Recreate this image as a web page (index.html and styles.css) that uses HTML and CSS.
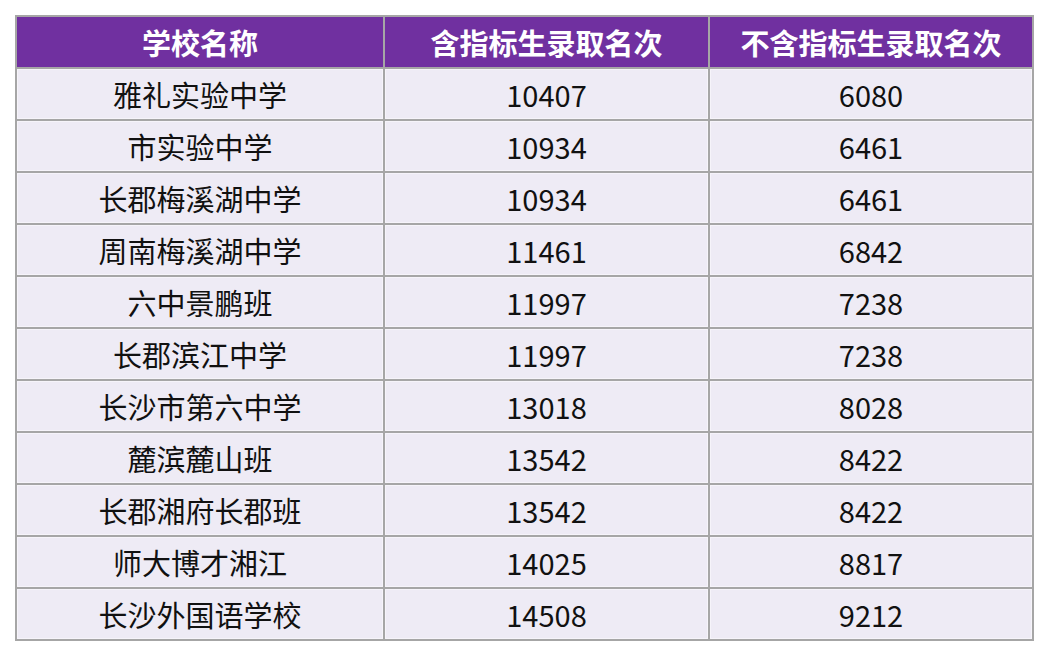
FILE: index.html
```html
<!DOCTYPE html>
<html lang="zh-CN">
<head>
<meta charset="utf-8">
<title>录取名次</title>
<link rel="stylesheet" href="styles.css">
</head>
<body>
<div class="page">
<table class="rank">
<colgroup><col class="c1"><col class="c2"><col class="c3"></colgroup>
<thead>
<tr><th>学校名称</th><th>含指标生录取名次</th><th>不含指标生录取名次</th></tr>
</thead>
<tbody>
<tr><td>雅礼实验中学</td><td>10407</td><td>6080</td></tr>
<tr><td>市实验中学</td><td>10934</td><td>6461</td></tr>
<tr><td>长郡梅溪湖中学</td><td>10934</td><td>6461</td></tr>
<tr><td>周南梅溪湖中学</td><td>11461</td><td>6842</td></tr>
<tr><td>六中景鹏班</td><td>11997</td><td>7238</td></tr>
<tr><td>长郡滨江中学</td><td>11997</td><td>7238</td></tr>
<tr><td>长沙市第六中学</td><td>13018</td><td>8028</td></tr>
<tr><td>麓滨麓山班</td><td>13542</td><td>8422</td></tr>
<tr><td>长郡湘府长郡班</td><td>13542</td><td>8422</td></tr>
<tr><td>师大博才湘江</td><td>14025</td><td>8817</td></tr>
<tr><td>长沙外国语学校</td><td>14508</td><td>9212</td></tr>
</tbody>
</table>
</div>
</body>
</html>
```

FILE: styles.css
```css
html, body {
  margin: 0;
  padding: 0;
  background: #ffffff;
}
.page {
  padding: 15px 0 0 15px;
}
.rank {
  border-collapse: collapse;
  width: 1017px;
  table-layout: fixed;
  font-family: "Noto Sans CJK SC", "Noto Sans", sans-serif;
  font-size: 29px;
  color: #111111;
}
.rank .c1 { width: 368px; }
.rank .c2 { width: 325px; }
.rank .c3 { width: 324px; }
.rank th, .rank td {
  border: 2px solid #a6a6a6;
  height: 50px;
  padding: 0;
  text-align: center;
  vertical-align: middle;
  line-height: 1;
}
.rank th {
  background: #7030a0;
  color: #ffffff;
  font-weight: bold;
}
.rank td {
  background: #eeebf5;
  box-shadow: inset 0 0 0 1px #f6f4fa;
}
```
